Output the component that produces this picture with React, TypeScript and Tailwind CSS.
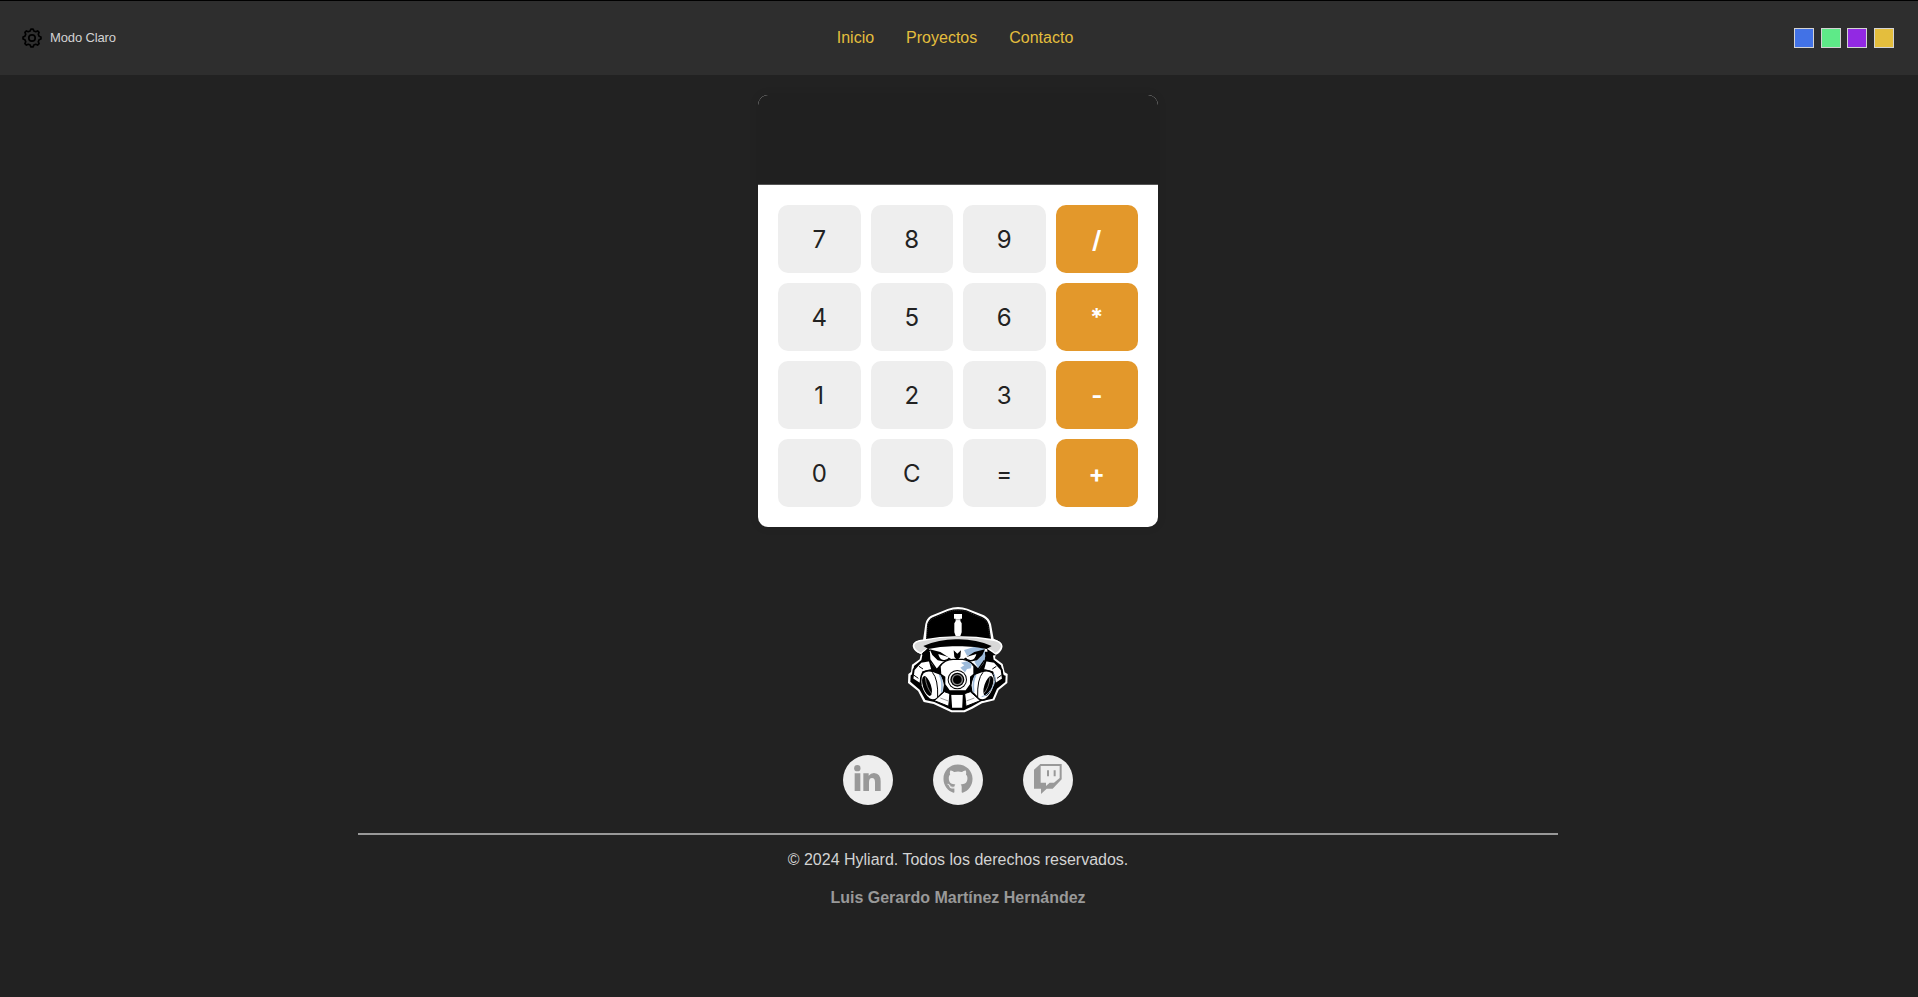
import { FaGithub } from "react-icons/fa";

const links = ["Inicio", "Proyectos", "Contacto"];
const keys = ["7", "8", "9", "/", "4", "5", "6", "*", "1", "2", "3", "-", "0", "C", "=", "+"];
const swatches = ["bg-[#4272e6]", "bg-[#5eea88]", "bg-[#9229e3]", "bg-[#e4be3d]"];

function gearPath() {
  const points: string[] = [];
  for (let i = 0; i < 8; i++) {
    const a = (i * Math.PI) / 4 - Math.PI / 2;
    for (const [offset, radius] of [[-0.25, 7.3], [-0.12, 9], [0.12, 9], [0.25, 7.3]]) {
      points.push(`${(10 + radius * Math.cos(a + offset)).toFixed(2)} ${(10 + radius * Math.sin(a + offset)).toFixed(2)}`);
    }
  }
  return `M${points.join("L")}Z`;
}

function Gear() {
  return (
    <svg className="size-5" viewBox="0 0 20 20" fill="none" stroke="#000" strokeWidth="1.7" strokeLinejoin="round">
      <path d={gearPath()} />
      <circle cx="10" cy="10" r="3.2" />
    </svg>
  );
}

function LinkedIn() {
  return (
    <svg className="h-[26px] w-[27px]" viewBox="0 0 81 78" fill="#999">
      <circle cx="10" cy="9.5" r="9.5" />
      <path d="M2 25H19V78H2ZM28 25H44V32Q50 24 60 24Q80 25 80 49V78H63V52Q63 39 54 39Q45 39 45 52V78H28Z" />
    </svg>
  );
}

function Twitch() {
  return (
    <svg className="h-[30px] w-7" viewBox="0 0 84 90" fill="#999">
      <path fillRule="evenodd" d="M0 17L19 0H83V46L56 74H38L21 90V74H0ZM20 6V56H36V66L47 56H60L77 42V6Z" />
      <path d="M39 19H45V37H39ZM59 19H65V37H59Z" />
    </svg>
  );
}

function HalfMask() {
  return (
    <g>
      <path d="M78 200L56 224L52 252L76 268L84 232L112 224L104 196Z" fill="#fff" stroke="#000" strokeWidth="6" strokeLinejoin="round" />
      <path d="M72 214L84 222M56 240L70 250" stroke="#000" strokeWidth="3" />
      <path d="M84 233Q96 224 114 229L134 236Q146 248 149 270L146 290L126 311Q116 318 104 313Q86 300 78 272Q74 246 84 233Z" fill="#fff" stroke="#000" strokeWidth="5" strokeLinejoin="round" />
      <path d="M112 232Q130 252 128 308" fill="none" stroke="#000" strokeWidth="3" />
      <path d="M134 240Q144 258 140 292" fill="none" stroke="#9dbbdb" strokeWidth="5" />
      <ellipse cx="96" cy="273" rx="12" ry="31" transform="rotate(-18 96 273)" fill="#000" />
      <path d="M91 247Q94 278 110 296" fill="none" stroke="#aaa" strokeWidth="2" />
    </g>
  );
}

function MaskLogo() {
  return (
    <svg className="h-[108px] w-[102px]" viewBox="36 33 306 324">
      <path d="M84 136L91 87Q94 70 108 62L158 42Q188 31 217 41L267 61Q283 70 288 87L296 131Q324 141 322 158Q318 172 302 180L300 190L323 207L329 232L338 237L337 264L311 285L298 316L261 325L232 341L209 352H169L143 340L116 327L86 321L69 288L39 264L40 237L48 231L51 209L74 193L78 177Q56 171 53 153Q53 138 84 136Z" fill="#fff" />
      <path d="M84 170H292L296 194L318 211L325 240L332 242L331 261L306 281L293 311L258 319L229 335L207 346H171L146 334L118 321L91 315L74 284L46 260L47 241L54 236L57 213L79 196Z" fill="#000" />
      <path d="M104 160Q140 150 187 152Q234 150 270 160L268 200L252 222L236 206L214 192H160L138 206L124 222L107 204Z" fill="#fff" />
      <path d="M207 165L239 155L268 160L271 184L266 204L250 220L238 200L258 185L248 176L216 182Z" fill="#9dbbdb" />
      <path d="M104 163L136 171L172 194L150 200L128 196L112 180ZM270 163L238 171L202 194L224 200L246 196L262 180Z" fill="#000" />
      <path d="M176 166L187 176L198 166L196 186L187 196L178 186Z" fill="#000" />
      <path d="M130 177L162 187Q157 196 146 195Q133 194 130 177ZM244 177L212 187Q217 196 228 195Q241 194 244 177Z" fill="#fff" />
      <path d="M106 196L128 228M268 196L246 228" stroke="#000" strokeWidth="4" />
      <HalfMask />
      <g transform="translate(376 0) scale(-1 1)"><HalfMask /></g>
      <path d="M260 305Q282 302 297 267Q303 247 296 236" fill="none" stroke="#9dbbdb" strokeWidth="3" />
      <path d="M135 214Q148 194 174 193H203Q226 196 237 214V238L227 246V268L213 288H163L149 268V246L137 238Z" fill="#fff" stroke="#000" strokeWidth="4" />
      <path d="M198 203L216 199L230 208L228 220L216 222L210 232L196 218L208 211Z" fill="#9dbbdb" />
      <circle cx="187" cy="254" r="29" fill="#000" />
      <circle cx="187" cy="254" r="26" fill="#fff" />
      <circle cx="187" cy="254" r="21" fill="#000" />
      <circle cx="187" cy="254" r="17" fill="#888" />
      <circle cx="187" cy="254" r="13" fill="#000" />
      <path d="M148 290L165 296L161 334L118 317ZM226 290L209 296L213 334L256 317Z" fill="#fff" stroke="#000" strokeWidth="3" />
      <path d="M136 309L160 318M238 309L214 318" stroke="#999" strokeWidth="3" />
      <path d="M166 296H206L204 341H169Z" fill="#fff" stroke="#000" strokeWidth="5" />
      <path d="M168 296H204" stroke="#000" strokeWidth="7" />
      <path d="M56 152Q56 138 88 135Q138 124 188 125Q240 124 292 135Q320 139 320 154Q317 168 300 176Q282 160 262 156Q228 150 187 151Q146 150 112 157Q92 161 78 175Q58 167 56 152Z" fill="#d8d8d8" stroke="#fff" strokeWidth="4" />
      <path d="M85 153Q134 132 187 133Q242 132 290 153L275 162Q232 152 187 154Q142 152 100 162Z" fill="#000" />
      <path d="M79 178L98 160L106 166L94 184ZM276 161L303 180L280 184Z" fill="#000" />
      <path d="M93 132L96 91Q99 74 113 67L160 47Q188 39 214 46L262 66Q278 74 282 90L288 131Q239 123 188 124Q137 123 93 132Z" fill="#000" />
      <path d="M94 129L98 91Q101 76 114 70L160 50Q188 42 214 49L261 69Q275 76 279 90L285 128" fill="none" stroke="#999" strokeWidth="1" strokeDasharray="3 3" />
      <path d="M177 57H201V71H196V78L200 85V112L196 123H182L178 112V85L182 78V71H177Z" fill="#fff" />
      <path d="M182 74H196" stroke="#777" strokeWidth="2" />
    </svg>
  );
}

export default function App() {
  return (
    <div className="flex min-h-[997px] flex-col items-center bg-[#222] pr-0.5 font-['Liberation_Sans',Arial,sans-serif]">
      <header className="-mr-0.5 flex h-[75px] w-[1918px] items-center border-t border-black bg-[#2e2e2e] pr-6 pl-[22px]">
        <div className="flex flex-1 items-center gap-2 text-[13px] tracking-[-0.13px] text-[#d3d3d3]">
          <Gear />
          <span>Modo Claro</span>
        </div>
        <nav className="mr-1.5 flex justify-center gap-8 text-base text-[#e4be3d]">
          {links.map((link) => <a key={link} href="#">{link}</a>)}
        </nav>
        <div className="flex flex-1 justify-end gap-[6.67px]">
          {swatches.map((color) => <button key={color} className={`size-5 border border-[#d3d3d3] ${color}`} />)}
        </div>
      </header>

      <main className="mt-5 h-[432px] w-[400px] overflow-hidden rounded-[10px] bg-white shadow-[0_0_10px_rgba(0,0,0,0.1)]">
        <div className="h-[90px] border-b border-[#555] bg-[#202020]" />
        <div className="grid grid-cols-4 gap-2.5 p-5 font-['Inter',sans-serif] text-2xl">
          {keys.map((key, i) => (
            <button key={key} className={i % 4 === 3 ? "h-[68px] rounded-[10px] bg-[#e3982b] pt-0.5 font-bold text-white" : "h-[68px] rounded-[10px] bg-[#eee] pt-0.5 text-[#222]"}>
              {key}
            </button>
          ))}
        </div>
      </main>

      <footer className="mt-[79px] flex w-[1200px] flex-col items-center">
        <MaskLogo />
        <div className="mt-[41px] flex gap-10">
          <a href="#" className="flex size-[50px] items-center justify-center rounded-full bg-[#eee] pr-px pb-1"><LinkedIn /></a>
          <a href="#" className="flex size-[50px] items-center justify-center rounded-full bg-[#eee] pb-0.5 text-[#999]"><FaGithub className="size-[30px]" /></a>
          <a href="#" className="flex size-[50px] items-center justify-center rounded-full bg-[#eee] pb-0.5"><Twitch /></a>
        </div>
        <hr className="mt-7 w-full border-0 border-t-2 border-[#999]" />
        <p className="mt-[13px] text-base text-[#d3d3d3]">© 2024 Hyliard. Todos los derechos reservados.</p>
        <p className="mt-3.5 text-base font-bold text-[#999]">Luis Gerardo Martínez Hernández</p>
      </footer>
    </div>
  );
}
